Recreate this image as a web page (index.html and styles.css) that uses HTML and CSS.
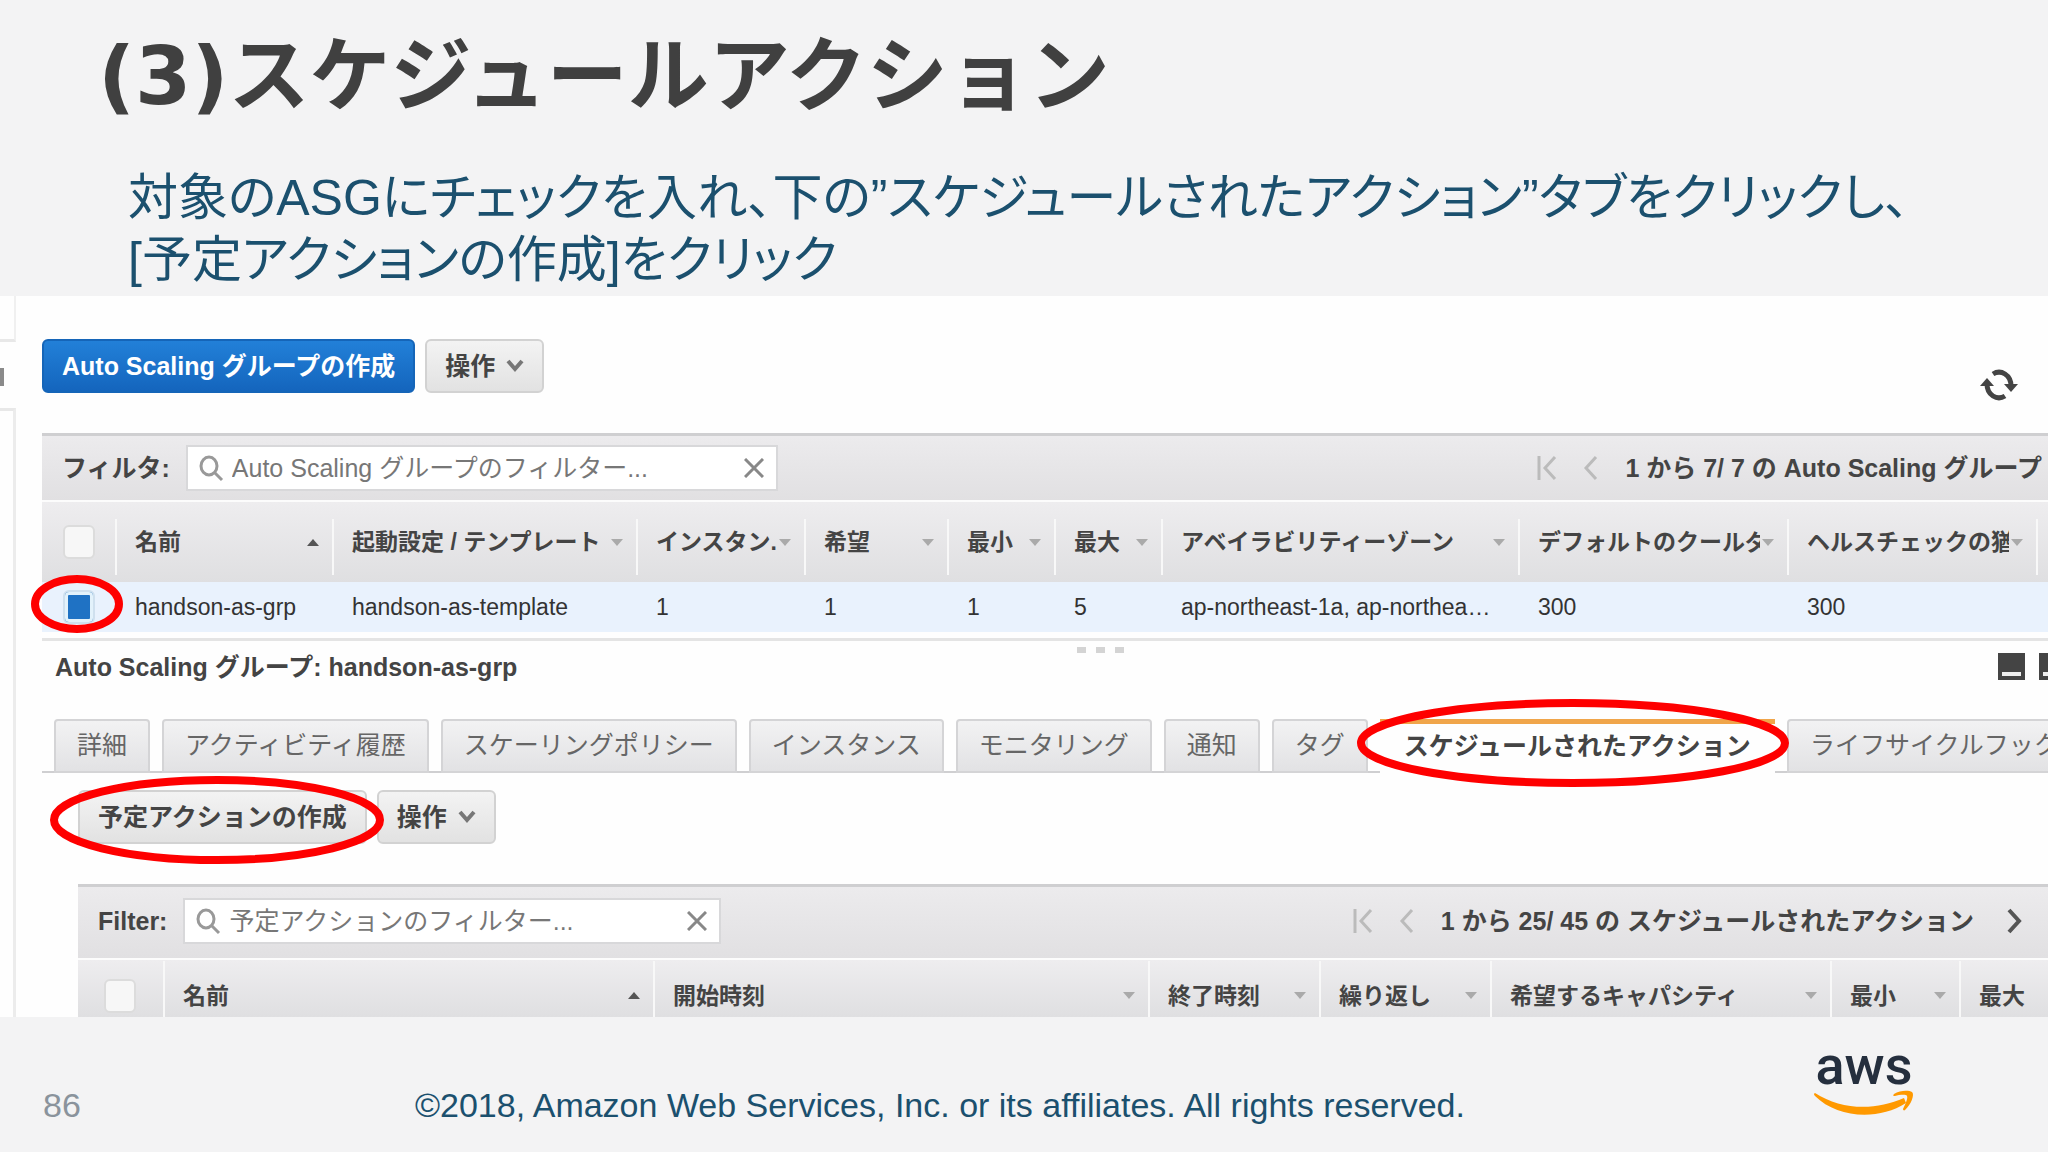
FILE: index.html
```
<!DOCTYPE html>
<html lang="ja">
<head>
    <meta charset="UTF-8">
    <meta name="viewport" content="width=device-width, initial-scale=1.0">
    <title>(3)スケジュールアクション</title>
    <link rel="stylesheet" href="styles.css">
</head>
<body>
    <header class="slide-header">
        <h1>(3)スケジュールアクション</h1>
        <p>対象のASGにチェックを入れ、下の”スケジュールされたアクション”タブをクリックし、<br>[予定アクションの作成]をクリック</p>
    </header>

    <div class="console">
        <div class="side-edge">
            <div class="side-top"></div>
            <div class="side-handle"></div>
            <div class="side-bottom"></div>
        </div>

        <main class="content">
            <div class="toolbar">
                <button class="btn btn-primary">Auto Scaling グループの作成</button>
                <button class="btn">操作
                    <svg class="chevron" viewBox="0 0 18 14"><path d="M2 2l7 8 7-8"/></svg>
                </button>
                <button class="refresh" aria-label="更新">
                    <svg viewBox="0 0 38 36">
                        <path class="arc" d="M13 7C21 2 31 8 31 19"/>
                        <path class="arc" d="M25 29C17 34 7 28 7 17"/>
                        <path d="M24 17h14l-7 8zM0 19h14l-7-8z"/>
                    </svg>
                </button>
            </div>

            <section class="groups">
                <div class="filter-bar">
                    <label for="group-filter">フィルタ:</label>
                    <div class="search search-groups">
                        <svg class="lens" viewBox="0 0 26 28"><ellipse cx="11" cy="12" rx="8" ry="9"/><path d="M17 19l7 7"/></svg>
                        <input type="text" id="group-filter" placeholder="Auto Scaling グループのフィルター...">
                        <button class="clear" aria-label="クリア"><svg viewBox="0 0 20 20"><path d="M1 1l18 18M19 1L1 19"/></svg></button>
                    </div>
                    <div class="pager">
                        <button aria-label="最初"><svg viewBox="0 0 20 26"><path d="M2 1v24M18 2L8 13l10 11"/></svg></button>
                        <button aria-label="前へ"><svg viewBox="0 0 20 26"><path d="M15 2L5 13l10 11"/></svg></button>
                        <span>1 から 7/ 7 の Auto Scaling グループ</span>
                    </div>
                </div>
                <table class="grid">
                    <colgroup>
                        <col class="c-check"><col class="c-name"><col class="c-template"><col class="c-instance"><col class="c-desired"><col class="c-min"><col class="c-min"><col class="c-zone"><col class="c-cooldown"><col class="c-health"><col>
                    </colgroup>
                    <thead>
                        <tr>
                            <th><input type="checkbox" aria-label="すべて選択"></th>
                            <th><div class="head"><span>名前</span><i class="sort up"></i></div></th>
                            <th><div class="head"><span>起動設定 / テンプレート</span><i class="sort"></i></div></th>
                            <th><div class="head"><span>インスタン.</span><i class="sort"></i></div></th>
                            <th><div class="head"><span>希望</span><i class="sort"></i></div></th>
                            <th><div class="head"><span>最小</span><i class="sort"></i></div></th>
                            <th><div class="head"><span>最大</span><i class="sort"></i></div></th>
                            <th><div class="head"><span>アベイラビリティーゾーン</span><i class="sort"></i></div></th>
                            <th><div class="head"><span>デフォルトのクールダ</span><i class="sort"></i></div></th>
                            <th><div class="head"><span>ヘルスチェックの猶</span><i class="sort"></i></div></th>
                            <th></th>
                        </tr>
                    </thead>
                    <tbody>
                        <tr>
                            <td class="marked"><input type="checkbox" aria-label="handson-as-grp" checked>
                                <svg class="mark mark-check"><ellipse cx="50%" cy="50%" rx="42" ry="25"/></svg>
                            </td>
                            <td>handson-as-grp</td>
                            <td>handson-as-template</td>
                            <td>1</td>
                            <td>1</td>
                            <td>1</td>
                            <td>5</td>
                            <td>ap-northeast-1a, ap-northea…</td>
                            <td>300</td>
                            <td>300</td>
                            <td></td>
                        </tr>
                    </tbody>
                </table>
            </section>

            <div class="splitter"><i></i><i></i><i></i></div>

            <section class="details">
                <div class="details-head">
                    <h2>Auto Scaling グループ: handson-as-grp</h2>
                    <div class="views">
                        <button class="view" aria-label="下に表示"><i></i></button>
                        <button class="view" aria-label="半分に表示"><i></i></button>
                    </div>
                </div>

                <div class="tabs" role="tablist">
                    <button class="tab" role="tab">詳細</button>
                    <button class="tab" role="tab">アクティビティ履歴</button>
                    <button class="tab" role="tab">スケーリングポリシー</button>
                    <button class="tab" role="tab">インスタンス</button>
                    <button class="tab" role="tab">モニタリング</button>
                    <button class="tab" role="tab">通知</button>
                    <button class="tab" role="tab">タグ</button>
                    <button class="tab active" role="tab" aria-selected="true">スケジュールされたアクション
                        <svg class="mark mark-tab"><ellipse cx="50%" cy="50%" rx="212" ry="40"/></svg>
                    </button>
                    <button class="tab" role="tab">ライフサイクルフック</button>
                </div>

                <div class="actions">
                    <div class="toolbar">
                        <button class="btn marked">予定アクションの作成
                            <svg class="mark mark-create"><ellipse cx="50%" cy="50%" rx="163" ry="40"/></svg>
                        </button>
                        <button class="btn">操作
                            <svg class="chevron" viewBox="0 0 18 14"><path d="M2 2l7 8 7-8"/></svg>
                        </button>
                    </div>

                    <div class="filter-bar">
                        <label for="action-filter">Filter:</label>
                        <div class="search search-actions">
                            <svg class="lens" viewBox="0 0 26 28"><ellipse cx="11" cy="12" rx="8" ry="9"/><path d="M17 19l7 7"/></svg>
                            <input type="text" id="action-filter" placeholder="予定アクションのフィルター...">
                            <button class="clear" aria-label="クリア"><svg viewBox="0 0 20 20"><path d="M1 1l18 18M19 1L1 19"/></svg></button>
                        </div>
                        <div class="pager">
                            <button aria-label="最初"><svg viewBox="0 0 20 26"><path d="M2 1v24M18 2L8 13l10 11"/></svg></button>
                            <button aria-label="前へ"><svg viewBox="0 0 20 26"><path d="M15 2L5 13l10 11"/></svg></button>
                            <span>1 から 25/ 45 の スケジュールされたアクション</span>
                            <button class="next" aria-label="次へ"><svg viewBox="0 0 20 26"><path d="M5 2l10 11L5 24"/></svg></button>
                        </div>
                    </div>
                    <table class="grid">
                        <colgroup>
                            <col class="a-check"><col class="a-name"><col class="a-start"><col class="a-end"><col class="a-end"><col class="a-capacity"><col class="a-min"><col>
                        </colgroup>
                        <thead>
                            <tr>
                                <th><input type="checkbox" aria-label="すべて選択"></th>
                                <th><div class="head"><span>名前</span><i class="sort up"></i></div></th>
                                <th><div class="head"><span>開始時刻</span><i class="sort"></i></div></th>
                                <th><div class="head"><span>終了時刻</span><i class="sort"></i></div></th>
                                <th><div class="head"><span>繰り返し</span><i class="sort"></i></div></th>
                                <th><div class="head"><span>希望するキャパシティ</span><i class="sort"></i></div></th>
                                <th><div class="head"><span>最小</span><i class="sort"></i></div></th>
                                <th><div class="head"><span>最大</span></div></th>
                            </tr>
                        </thead>
                    </table>
                </div>
            </section>
        </main>
    </div>

    <footer class="slide-footer">
        <span class="page">86</span>
        <span class="copyright">©2018, Amazon Web Services, Inc. or its affiliates. All rights reserved.</span>
        <svg class="logo" viewBox="0 0 104 66" role="img" aria-label="aws">
            <text x="52" y="32" text-anchor="middle">aws</text>
            <path d="M3 41C29 58 63 59 92 46l2 5C66 69 25 66 3 44q-2-2 0-3z"/>
            <path d="M82 42c6-4 15-4 18-2s-1 13-7 18c-1 1-2 0-2-1 3-6 5-11 4-13s-8-1-12 0q-3 0-1-2z"/>
        </svg>
    </footer>
</body>
</html>
```
FILE: styles.css
```
:root {
    --text: #444;
    --line: #cfcfd1;
    --navy: #1b506e;
    --mark: #fe0000;
}

* {
    margin: 0;
    padding: 0;
    box-sizing: border-box;
}

body {
    background: #f3f3f4;
    color: var(--text);
    font-family: "Liberation Sans", "Noto Sans CJK JP", sans-serif;
    font-size: 25px;
    line-height: 36px;
    min-height: 100vh;
    display: flex;
    flex-direction: column;
    overflow-x: hidden;
}

button, input {
    font: inherit;
    color: inherit;
}

button {
    background: none;
    border: none;
    cursor: pointer;
    white-space: nowrap;
}

svg {
    display: block;
}

/* slide heading */
.slide-header {
    padding: 16px 98px 5px;
}

.slide-header h1 {
    font-family: "DejaVu Sans", "Noto Sans CJK JP", sans-serif;
    font-size: 81px;
    line-height: 120px;
    color: #404040;
}

.slide-header p {
    padding: 31px 0 0 30px;
    font-size: 50px;
    line-height: 62px;
    font-feature-settings: "palt";
    color: var(--navy);
    white-space: nowrap;
}

/* console */
.console {
    display: flex;
    background: #fefefe;
    overflow: hidden;
}

.side-edge {
    width: 16px;
    flex: none;
    display: flex;
    flex-direction: column;
}

.side-top {
    height: 46px;
    border-right: 2px solid #f0f0f0;
    border-bottom: 3px solid #e8e8e8;
}

.side-handle {
    width: 4px;
    height: 18px;
    margin: 26px 0 22px;
    background: #8a8a8a;
}

.side-bottom {
    flex: 1;
    border-top: 3px solid #e8e8e8;
    border-right: 3px solid #ececec;
}

.content {
    flex: 1;
    min-width: 0;
    padding: 43px 0 0 26px;
}

.toolbar {
    display: flex;
    gap: 10px;
    margin-bottom: 40px;
}

.btn {
    height: 54px;
    padding: 0 18px;
    display: flex;
    align-items: center;
    gap: 11px;
    border: 2px solid #d2d2d2;
    border-radius: 6px;
    background: linear-gradient(#f3f3f3, #e2e2e2);
    font-weight: bold;
}

.btn-primary {
    border-color: #1565b8;
    background: linear-gradient(#2280d8, #1465bd);
    color: #fff;
}

.chevron {
    width: 18px;
    height: 14px;
    fill: none;
    stroke: #777;
    stroke-width: 4;
}

.refresh {
    align-self: flex-end;
    margin: 0 30px -10px auto;
}

.refresh svg {
    width: 38px;
    height: 36px;
    fill: #444;
}

.refresh .arc {
    fill: none;
    stroke: #444;
    stroke-width: 5;
}

.filter-bar {
    display: flex;
    align-items: center;
    height: 69px;
    padding: 0 6px 0 20px;
    border-top: 3px solid var(--line);
    border-bottom: 2px solid #fcfcfc;
    background: linear-gradient(#ecebed, #e1e0e2);
    font-weight: bold;
}

.search {
    display: flex;
    align-items: center;
    height: 46px;
    margin-left: 16px;
    padding: 0 12px 0 10px;
    border: 2px solid #d8d8da;
    background: #fff;
    font-weight: normal;
}

.search-groups {
    width: 592px;
}

.search-actions {
    width: 538px;
}

.search input {
    flex: 1;
    min-width: 0;
    margin-left: 8px;
    border: none;
    outline: none;
    background: none;
}

.search input::placeholder {
    color: #777;
    opacity: 1;
}

.lens {
    width: 26px;
    height: 28px;
    fill: none;
    stroke: #999;
    stroke-width: 3;
}

.clear svg {
    width: 20px;
    height: 20px;
    stroke: #888;
    stroke-width: 3;
}

.pager {
    display: flex;
    align-items: center;
    gap: 24px;
    margin-left: auto;
    white-space: nowrap;
}

.pager svg {
    width: 20px;
    height: 26px;
    fill: none;
    stroke: #bbb;
    stroke-width: 3;
}

.pager .next {
    margin-left: 6px;
}

.pager .next svg {
    stroke: #555;
    stroke-width: 4;
}

/* tables */
.grid {
    width: 100%;
    table-layout: fixed;
    border-collapse: collapse;
    font-size: 23px;
    white-space: nowrap;
}

.grid th {
    height: 80px;
    padding: 0 13px 0 20px;
    text-align: left;
    background: linear-gradient(#eeedef, #dfdfe1);
}

.grid th:first-child, .grid td:first-child {
    padding: 0 0 0 21px;
}

.grid td {
    height: 50px;
    padding: 0 0 0 20px;
    background: #e9f2fd;
    color: #333;
}

.grid th + th {
    background: linear-gradient(#f8f8f8, #f8f8f8) 0 70% / 2px 56px no-repeat, linear-gradient(#eeedef, #dfdfe1);
}

.grid input {
    appearance: none;
    display: block;
    width: 32px;
    height: 34px;
    border: 2px solid #dcdcdc;
    border-radius: 6px;
    background: #f7f7f7;
}

.grid input:checked {
    border-color: #cfe0ee;
    background: #1f72c4;
    box-shadow: inset 0 0 0 3px #e3f2fb;
}

.head {
    display: flex;
    align-items: center;
    gap: 2px;
}

.head span {
    flex: 1;
    overflow: hidden;
}

.sort {
    flex: none;
    border: 6px solid transparent;
    border-top: 7px solid #aaa;
    border-bottom: none;
}

.sort.up {
    border-top: none;
    border-bottom: 7px solid #555;
}

.c-check { width: 73px; }
.c-name { width: 217px; }
.c-template { width: 304px; }
.c-instance { width: 168px; }
.c-desired { width: 143px; }
.c-min { width: 107px; }
.c-zone { width: 357px; }
.c-cooldown { width: 269px; }
.c-health { width: 249px; }

.a-check { width: 85px; }
.a-name { width: 490px; }
.a-start { width: 495px; }
.a-end { width: 171px; }
.a-capacity { width: 340px; }
.a-min { width: 129px; }

.splitter {
    display: flex;
    justify-content: center;
    gap: 10px;
    margin-top: 6px;
    padding: 6px 0 0 110px;
    border-top: 3px solid #e4e4e4;
}

.splitter i {
    width: 9px;
    height: 6px;
    background: #d4d4d4;
}

/* details pane */
.details-head {
    display: flex;
    justify-content: space-between;
    padding-left: 13px;
}

.details-head h2 {
    margin-top: -4px;
    font-size: 25px;
}

.views {
    display: flex;
    gap: 14px;
    margin-right: -18px;
}

.view {
    width: 27px;
    height: 27px;
    padding: 19px 4px 4px;
    background: #444;
}

.view i {
    display: block;
    height: 4px;
    background: #eee;
}

.tabs {
    display: flex;
    gap: 12px;
    height: 54px;
    margin-top: 34px;
    margin-right: -200px;
    padding-left: 12px;
    background: linear-gradient(var(--line), var(--line)) bottom / 100% 2px no-repeat;
    color: #666;
}

.tab {
    padding: 0 21px 2px;
    border: 2px solid #d4d4d6;
    border-radius: 4px 4px 0 0;
    background: linear-gradient(#f2f2f3, #e2e2e4);
}

.tab.active {
    position: relative;
    padding: 0 24px 6px;
    border: none;
    border-top: 5px solid #f0a54a;
    border-radius: 0;
    background: #fefefe;
    color: var(--text);
    font-weight: bold;
}

.actions {
    padding: 17px 0 0 36px;
}

.actions .toolbar {
    margin-bottom: 40px;
}

.actions .filter-bar {
    height: 76px;
    padding-right: 24px;
    padding-bottom: 4px;
}

.actions .grid th {
    height: 57px;
    padding-top: 14px;
}

.actions .grid th:first-child {
    padding-left: 26px;
}

/* red rings around the click targets */
.marked {
    position: relative;
}

.mark {
    position: absolute;
    top: 50%;
    left: 50%;
    transform: translate(-50%, -50%);
    overflow: visible;
    pointer-events: none;
    fill: none;
    stroke: var(--mark);
    stroke-width: 8;
}

.mark-check {
    top: 44%;
    left: 48%;
    width: 92px;
    height: 58px;
}

.mark-tab {
    top: 38%;
    left: 49%;
    width: 432px;
    height: 88px;
}

.mark-create {
    top: 56%;
    left: 48%;
    width: 334px;
    height: 88px;
}

/* footer */
.slide-footer {
    flex: 1;
    display: flex;
    align-items: center;
    padding: 0 132px 0 43px;
}

.page, .copyright {
    padding-top: 40px;
    font-size: 34px;
    white-space: nowrap;
}

.page {
    width: 372px;
    color: #8a939c;
}

.copyright {
    flex: 1;
    color: var(--navy);
}

.logo {
    width: 104px;
    height: 66px;
    fill: #f90;
}

.logo text {
    font-family: Roboto, sans-serif;
    font-size: 54px;
    font-weight: 500;
    fill: #252f3e;
}
```
